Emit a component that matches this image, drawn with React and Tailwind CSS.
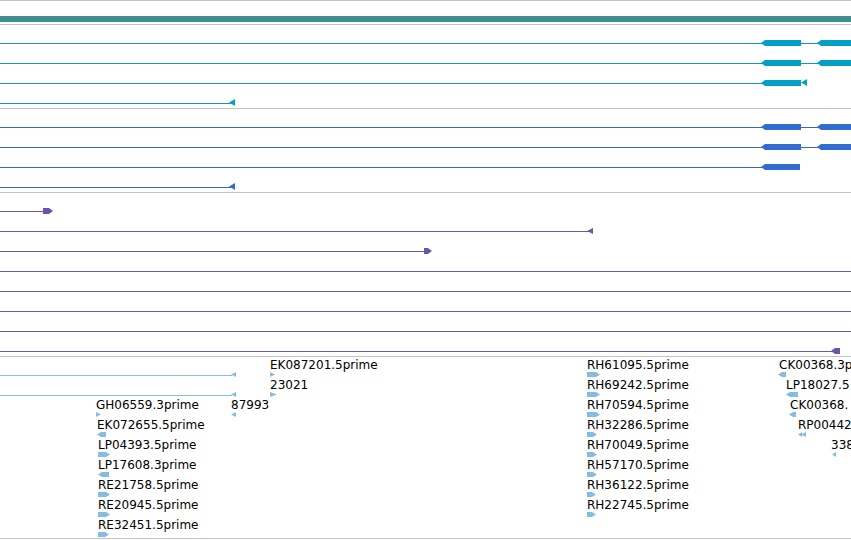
import React from "react";

const TEAL_L = "#1496b6";
const TEAL_F = "#02a0c4";
const BLUE_L = "#3768b9";
const BLUE_F = "#316dce";
const PUR_L = "#6e59a4";
const PUR_F = "#6c55a8";
const LB_L = "#8bbde1";
const LB_F = "#86bce2";

function Shape({ x, w, h = 6, top = 15, type, color }) {
  let pts;
  switch (type) {
    case "lb":
      pts = `0,${h / 2} 4,0 ${w},0 ${w},${h} 4,${h}`;
      break;
    case "rb":
      pts = `0,0 ${w - 4},0 ${w},${h / 2} ${w - 4},${h} 0,${h}`;
      break;
    case "lt":
      pts = `0,${h / 2} ${w},0 ${w},${h}`;
      break;
    case "rt":
      pts = `0,0 ${w},${h / 2} 0,${h}`;
      break;
    case "dd":
      pts = `0,${h / 2} 4,0 4,${h / 2 - 0.5} 8,0 8,${h} 4,${h / 2 + 0.5} 4,${h}`;
      break;
    default:
      pts = "";
  }
  return (
    <svg
      className="absolute block"
      style={{ left: x, top, width: w, height: h }}
      viewBox={`0 0 ${w} ${h}`}
      preserveAspectRatio="none"
    >
      <polygon points={pts} fill={color} />
    </svg>
  );
}

function Row({ line, lineColor, shapes = [], labels = [] }) {
  return (
    <div className="relative h-5">
      {line != null && (
        <div
          className="absolute left-0 top-[18px] h-px"
          style={{ width: line, backgroundColor: lineColor }}
        />
      )}
      {shapes.map((s, i) => (
        <Shape key={i} {...s} />
      ))}
      {labels.map((l, i) => (
        <span
          key={i}
          className="absolute top-[2px] whitespace-nowrap text-[12px] leading-[12px] text-black"
          style={{ left: l.x }}
        >
          {l.t}
        </span>
      ))}
    </div>
  );
}

function Track({ rows, lineColor, bottom = "pb-[3px]" }) {
  return (
    <div className={`flex flex-col ${bottom}`}>
      {rows.map((r, i) => (
        <Row key={i} lineColor={lineColor} {...r} />
      ))}
    </div>
  );
}

const Sep = () => <div className="h-px bg-[#c3c3c3]" />;

const tealRows = [
  { line: 851, shapes: [{ x: 761, w: 40, type: "lb", color: TEAL_F }, { x: 817, w: 40, type: "lb", color: TEAL_F }] },
  { line: 851, shapes: [{ x: 761, w: 40, type: "lb", color: TEAL_F }, { x: 817, w: 40, type: "lb", color: TEAL_F }] },
  { line: 762, shapes: [{ x: 761, w: 40, type: "lb", color: TEAL_F }, { x: 801, w: 6, h: 7, top: 14, type: "lt", color: TEAL_F }] },
  { line: 231, shapes: [{ x: 229, w: 6, h: 7, top: 14, type: "lt", color: TEAL_F }] },
];

const blueRows = [
  { line: 851, shapes: [{ x: 761, w: 40, type: "lb", color: BLUE_F }, { x: 817, w: 40, type: "lb", color: BLUE_F }] },
  { line: 851, shapes: [{ x: 761, w: 40, type: "lb", color: BLUE_F }, { x: 817, w: 40, type: "lb", color: BLUE_F }] },
  { line: 762, shapes: [{ x: 761, w: 39, type: "lb", color: BLUE_F }] },
  { line: 231, shapes: [{ x: 229, w: 6, h: 7, top: 14, type: "lt", color: BLUE_F }] },
];

const purpleRows = [
  { line: 45, shapes: [{ x: 43, w: 10, type: "rb", color: PUR_F }] },
  { line: 589, shapes: [{ x: 587, w: 6, h: 6, top: 15, type: "lt", color: PUR_F }] },
  { line: 426, shapes: [{ x: 424, w: 8, type: "rb", color: PUR_F }] },
  { line: 851 },
  { line: 851 },
  { line: 851 },
  { line: 851 },
  { line: 833, shapes: [{ x: 831, w: 9, type: "lb", color: PUR_F }] },
];

const g = (x, w, type) => ({ x, w, h: 5, top: 15, type, color: LB_F });

const labelRows = [
  {
    line: 232,
    shapes: [g(231, 5, "lt"), g(270, 5, "rt"), g(587, 13, "rb"), g(778, 8, "lb")],
    labels: [{ x: 270, t: "EK087201.5prime" }, { x: 587, t: "RH61095.5prime" }, { x: 779, t: "CK00368.3p" }],
  },
  {
    line: 232,
    shapes: [g(231, 5, "lt"), g(270, 7, "rt"), g(587, 13, "rb"), g(786, 12, "lb")],
    labels: [{ x: 270, t: "23021" }, { x: 587, t: "RH69242.5prime" }, { x: 786, t: "LP18027.5" }],
  },
  {
    shapes: [g(96, 5, "rt"), g(231, 5, "lt"), g(587, 13, "rb"), g(789, 7, "lb")],
    labels: [{ x: 96, t: "GH06559.3prime" }, { x: 231, t: "87993" }, { x: 587, t: "RH70594.5prime" }, { x: 790, t: "CK00368." }],
  },
  {
    shapes: [g(97, 9, "lb"), g(587, 10, "rb"), g(798, 9, "dd")],
    labels: [{ x: 97, t: "EK072655.5prime" }, { x: 587, t: "RH32286.5prime" }, { x: 798, t: "RP00442" }],
  },
  {
    shapes: [g(98, 12, "rb"), g(587, 10, "rb"), g(832, 4, "lt")],
    labels: [{ x: 98, t: "LP04393.5prime" }, { x: 587, t: "RH70049.5prime" }, { x: 831, t: "338" }],
  },
  {
    shapes: [g(98, 11, "lb"), g(587, 10, "rb")],
    labels: [{ x: 98, t: "LP17608.3prime" }, { x: 587, t: "RH57170.5prime" }],
  },
  {
    shapes: [g(98, 12, "rb"), g(587, 9, "rb")],
    labels: [{ x: 98, t: "RE21758.5prime" }, { x: 587, t: "RH36122.5prime" }],
  },
  {
    shapes: [g(98, 12, "rb"), g(587, 9, "rb")],
    labels: [{ x: 98, t: "RE20945.5prime" }, { x: 587, t: "RH22745.5prime" }],
  },
  {
    shapes: [g(98, 11, "rb")],
    labels: [{ x: 98, t: "RE32451.5prime" }],
  },
];

export default function App() {
  return (
    <div className="w-[851px] h-[540px] overflow-hidden bg-white font-['DejaVu_Sans',sans-serif] flex flex-col">
      <Sep />
      <div className="h-[15px]" />
      <div className="h-[6px] bg-[#408e8f]" />
      <div className="h-[2px]" />
      <Sep />
      <Track rows={tealRows} lineColor={TEAL_L} />
      <Sep />
      <Track rows={blueRows} lineColor={BLUE_L} />
      <Sep />
      <Track rows={purpleRows} lineColor={PUR_L} />
      <Sep />
      <Track rows={labelRows} lineColor={LB_L} bottom="pb-px" />
      <Sep />
    </div>
  );
}
